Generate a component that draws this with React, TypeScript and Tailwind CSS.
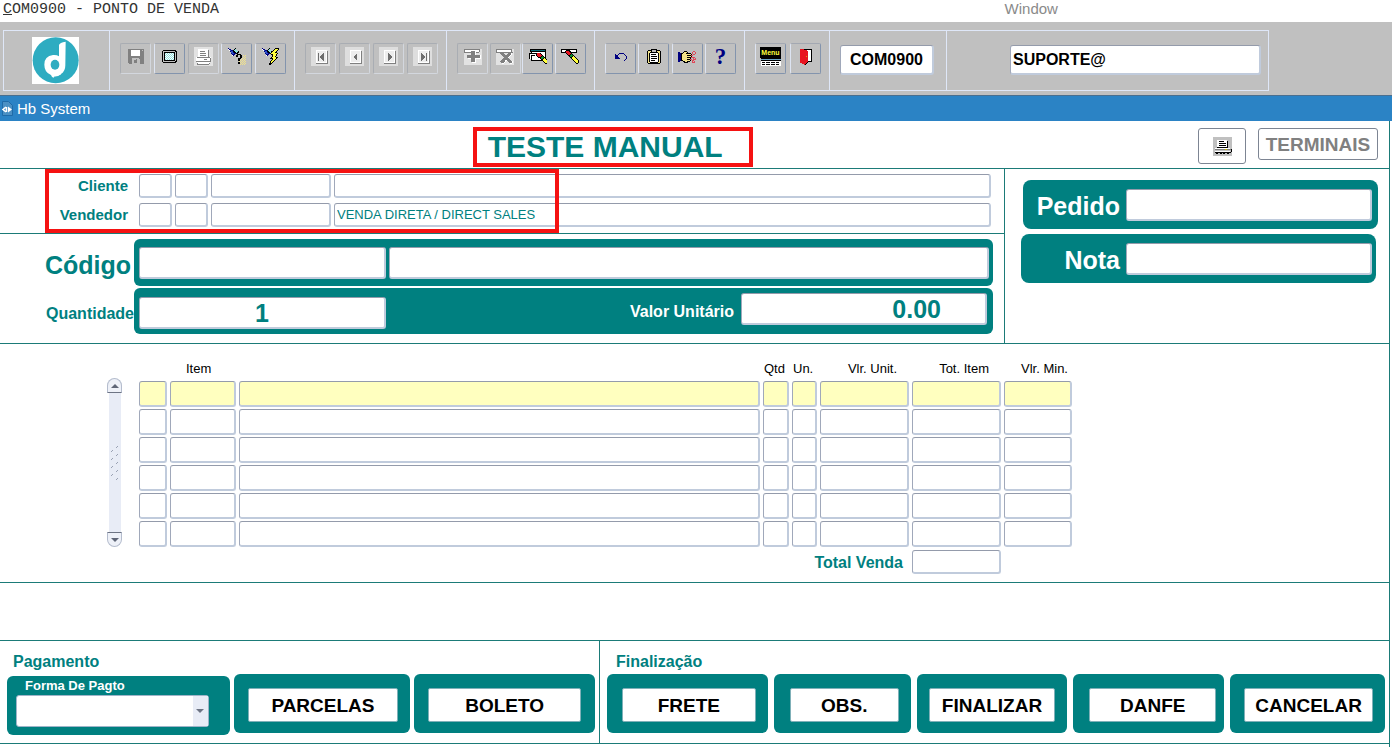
import { useState } from "react";
import type { InputHTMLAttributes, ReactNode } from "react";

const PALETTE: Record<string, string> = {
  k: "#000000",
  w: "#ffffff",
  g: "#808080",
  l: "#c0c0c0",
  e: "#e2e2e2",
  b: "#000080",
  u: "#2a50c8",
  c: "#8fe3e0",
  t: "#0a6f7f",
  y: "#ffff3c",
  o: "#c9b800",
  s: "#f3e38a",
  r: "#e81420",
  p: "#e04858",
  n: "#0a8a2a",
  v: "#6fa8c8",
};

const SPRITES = {
  save: [
    "gggggggggggggggg",
    "gggwwwwwwwwwgglg",
    "gggwwwwwwwwwgggg",
    "gggwwwwwwwwwgggg",
    "gggwwwwwwwwwgggg",
    "gggwwwwwwwwwgggg",
    "gggwwwwwwwwwgggg",
    "gggggggggggggggg",
    "gggggggggggggggg",
    "gggglllllllggggg",
    "ggggllllglllgggg",
    "ggggllggglllgggg",
    "ggggllggglllgggg",
    "ggggllggglllgggg",
    ".gggllllllllgggg",
  ],
  screen: [
    ".kkkkkkkkkkkkk.",
    "kllllllllllllkk",
    "klkkkkkkkkkkklk",
    "klkcwcwcwcwcklk",
    "klkwcwcwcwcwklk",
    "klkcwcwcwcwcklk",
    "klkwcwcwcwcwklk",
    "klkcwcwcwcwcklk",
    "klkwcwcwcwcwklk",
    "klkcwcwcwcwcklk",
    "klkkkkkkkkkkklk",
    "kllllllllllllkk",
    ".kkkkkkkkkkkkk.",
  ],
  printerOff: [
    "eeeeeeeeeeeeeeeeeee",
    "eeeeeeeeeeeeeeeeeee",
    "eeeewwwwwwwwwweeeee",
    "eeeewwwwwwwwwwgeeee",
    "eeeewwgggggwwwgeeee",
    "eeeewwwwwwwwwwgeeee",
    "eeeewwggggggwwgeeee",
    "eeeewwwwwwwwwwgeeee",
    "eeeewwggggggwwgeeee",
    "eeeewwwwwwwwwwgeeee",
    "eewgggggggggggggwee",
    "eewwwwwwwwwwwwwwgee",
    "eewwwwwwwwgggwwwgee",
    "eewwwwwwwwwwwwwwgee",
    "eegggggggggggggggee",
    "eeewwwwwwwwwwwwweee",
    "eeegwwwwwwwwwwwgeee",
    "eeeggggggggggggeeee",
    "eeeeeeeeeeeeeeeeeee",
  ],
  printer: [
    "lllllllllllllllllll",
    "lllllllllllllllllll",
    "lllllllllllllllllll",
    "llllwwwwwwwwwwlllll",
    "llllwwkkkkkwwwkllll",
    "llllwwwwwwwwwwkllll",
    "llllwwkkkkkkkwkllll",
    "llllwwwwwwwwwwkllll",
    "llllwwkkkkkkkwkllll",
    "llllwwwwwwwwwwkllll",
    "llllkkkkkkkkkkkllll",
    "llwwwwwwwwwwwwwwwll",
    "llggggggggggooggggk",
    "llllllllllllllllllk",
    "llwwwwwwwwwwwwwwwlk",
    "llkkkkkkkkkkkkkkkkl",
    "lllkkllkklkkllkklll",
    "lllllllllllllllllll",
    "lllllllllllllllllll",
  ],
  torchHelp: [
    "b......k..........",
    "wbb...kc..........",
    ".wubbkccc.........",
    "..buukkccck.......",
    "...uubkkckk.......",
    "...buubbkk........",
    "....bbb..kkkk.....",
    "....wb..kk..kk.s.s",
    "........kk..kk..s.",
    "............kk.s.s",
    "..........kkk.s.s.",
    "..........kk.s.s.s",
    "..........kks.s.s.",
    "...........s.s.s.s",
    "..........kks.s.s.",
    "..........kk.s.s.s",
    "............s.s.s.",
  ],
  torchBolt: [
    "b......k.....kkkk.",
    "wbb...kc....kyyyk.",
    ".wubbkccc..kyyyk..",
    "..buukkcckkyyyk...",
    "...uubkkckyyykk...",
    "...buubbkyyyyyyk..",
    "....bbb..kkyyyk...",
    "....wb....kyyyk...",
    "..........kyyk....",
    ".........kyyyykk..",
    "........kkkyyyk...",
    "..........kyyk....",
    ".........kyyk.....",
    "........kyyk......",
    "........kyk.......",
    ".......kkk........",
    ".......kk.........",
  ],
  queryEnter: [
    ".kkkkkkkkkkkkkkkk.",
    ".kttttttttttttttk.",
    ".kkkkkkkkkkkkkkkk.",
    "..kwwwwwwwwwwwwwk.",
    "kkkkkkkkrrrkwwwwk.",
    "kwwwwwwkrrrrkwwwk.",
    "kwkkkkwkrrrrrkwwk.",
    "kwkwwwwwkrrrknkwk.",
    "kwkwwwwwwkkknnnkk.",
    "kwkwwwwwwwwknnkyk.",
    "..kwwwwwwwwwkkyyyk",
    "..kkkkkkkkkkkkyyyy",
    "..............kyyy",
    "...............kyy",
    "................kk",
  ],
  queryCancel: [
    "kkkkkkkkkkkkkkkk..",
    "kwwwwkkkkwwwwwwk..",
    "kwwwkrrrkkwwwwwk..",
    "kkkkkrrrrkkkkkkk..",
    ".....krrrrk.......",
    "......krrknk......",
    ".......kknnnk.....",
    "........knnkyk....",
    ".........kkyyyk...",
    "..........kyyyyk..",
    "...........kyyyyk.",
    "............kyyyyk",
    ".............kyyyk",
    "..............kyyk",
    "...............kk.",
  ],
  add: [
    "ggggggggggggggggee",
    "gwwwwwwwwwwwwwwgee",
    "gwwwwwwggggwwwwgee",
    "gggggggggggwgggeee",
    "eeeeeeeggggweeeeee",
    "eeeeeeeggggweeeeee",
    "eeegggggggggggggwe",
    "eeegggggggggggggwe",
    "eeegggggggggggggwe",
    "eeeewwwggggwwwwwwe",
    "eeeeeeeggggweeeeee",
    "eeeeeeeggggweeeeee",
    "eeeeeeeggggweeeeee",
    "eeeeeeeewwwweeeeee",
    "eeeeeeeeeeeeeeeeee",
    "eeeeeeeeeeeeeeeeee",
  ],
  remove: [
    "ggggggggggggggggee",
    "gwwwwwwwwwwwwwwgee",
    "gwwwwwwwwwwwwwwgee",
    "ggggggggggggggggge",
    "eeeeggggeeeegggwee",
    "eeeeeggggeeggggwee",
    "eeeeeeggggggggweee",
    "eeeeeeeggggggweeee",
    "eeeeeeeeggggweeeee",
    "eeeeeeeggggggeeeee",
    "eeeeeeggggggggeeee",
    "eeeeeggggwwggggeee",
    "eeeegggggweeggggwe",
    "eeeeegggweeeegggwe",
    "eeeeeewweeeeeewwee",
    "eeeeeeeeeeeeeeeeee",
  ],
  undo: [
    "....bbbbb...",
    "b..b.....b..",
    "bbb.......b.",
    "bbb........b",
    "bbbb.......b",
    "bbbbb......b",
    "..........b.",
    ".........b..",
  ],
  clipboard: [
    "....kkkkkk....",
    ".kkkkllllkkkk.",
    "kssskllllksssk",
    "ksskkkkkkkkssk",
    "kskwwwwwwwwksk",
    "kskwkkkkkwwksk",
    "kskwwwwwwwwksk",
    "kskwkkkkkkwksk",
    "kskwwwwwwwwksk",
    "kskwkkkkkkwksk",
    "kskwwwwwwwwksk",
    "kskwkkkkwwwksk",
    "kskwwwwwwwwksk",
    "ksskkkkkkkkssk",
    ".kkkkkkkkkkkk.",
  ],
  hand: [
    "......kkk......pp.",
    "bb...ksssk....p..p",
    "bbbkkssskkkkk.p..p",
    "bbbksssssssssk.pp.",
    "bbbkssssskkkkpp...",
    "bbbksssssssssk....",
    "bbbkssssskkkkpppp.",
    "bbbkssssssssk..p.p",
    "bbbkssssskkkpp.ppp",
    "bbbkksssssssk.pp..",
    "bb...kksskkk..p.p.",
    "......kkkk....ppp.",
  ],
  menuGrid: [
    "kkkkkkkkkkkkkkkkkkkk",
    "vvvvvvvvvvvvvvvvvvvv",
    "kkkkkkkkkkkkkkkkkkkk",
    "wwwwwwwwwwwwwwwwwwww",
    "wkkkwkkkkwkkkkwkkkww",
    "wwwwwwwwwwwwwwwwwwww",
    "wkkkwkkkkwkkkkwkkkww",
    "wwwwwwwwwwwwwwwwwwww",
  ],
  exit: [
    "rrrrkkkkkkkk",
    "rrrrrrrwwwwk",
    "rrrrrrrrwwwk",
    "rrrrrrrrwwwk",
    "rrrrrrrrwwwk",
    "rrrrrrrrwwwk",
    "rrrrrrrrwwwk",
    "rrrrrrorwwwk",
    "rrrrrrrrwwwk",
    "rrrrrrrrwwwk",
    "rrrrrrrrwwwk",
    "rrrrrrrrwwwk",
    "rrrrrrrrkkkk",
    "rrrrrrrk....",
    "..rrrrk.....",
    "....rk......",
  ],
};

function Sprite({ name }: { name: keyof typeof SPRITES }) {
  const rows = SPRITES[name];
  const width = Math.max(...rows.map((r) => r.length));
  return (
    <svg
      className="shrink-0"
      width={width}
      height={rows.length}
      viewBox={`0 0 ${width} ${rows.length}`}
      shapeRendering="crispEdges"
      aria-hidden="true"
    >
      {rows.flatMap((row, y) =>
        [...row].map((ch, x) => (ch === "." ? null : <rect key={`${x}-${y}`} x={x} y={y} width="1" height="1" fill={PALETTE[ch]} />))
      )}
    </svg>
  );
}

function NavIcon({ points, bar }: { points: string; bar?: number }) {
  return (
    <svg width="19" height="19" viewBox="0 0 19 19" shapeRendering="crispEdges" aria-hidden="true">
      <path fill="#dedede" d="M0 0h19v19H0z" />
      <path fill="#808080" d="M5 4h12v13H5z" />
      <path fill="#fff" d="M5 3h11v13H5z" />
      <path fill="#ededed" d="M6 4h9v11H6z" />
      <polygon fill="#6e6e6e" points={points} />
      {bar && <path fill="#6e6e6e" d={`M${bar} 6h1v8h-1z`} />}
    </svg>
  );
}

function MenuIcon() {
  return (
    <span className="flex flex-col items-center">
      <span className="bg-black px-px text-[7px] leading-[11px] font-bold text-[#ffff3c]">Menu</span>
      <Sprite name="menuGrid" />
    </span>
  );
}

function Logo() {
  return (
    <svg className="ml-7" width="47" height="47" viewBox="0 0 141 141" role="img" aria-label="Logo">
      <path fill="#fff" d="M0 0h141v141H0z" />
      <circle cx="71" cy="70" r="69" fill="#2eacc1" />
      <path
        fill="#fff"
        d="M81 24q2-7 20-10l-1 71q0 18-13 26-9 6-19 5 0 4-4 6-5-1-7-8-20-8-20-31 0-26 26-29 11-1 18 4z"
      />
      <ellipse cx="69" cy="83" rx="13" ry="15" fill="#2eacc1" />
      <path fill="none" stroke="#fff" strokeWidth="5" d="M58 110q10 12 28 0" />
    </svg>
  );
}

type Tool = { label: string; icon: ReactNode; off?: boolean };

const TOOL_GROUPS: { width: string; tools: Tool[] }[] = [
  {
    width: "w-[185px]",
    tools: [
      { label: "Salvar", icon: <Sprite name="save" />, off: true },
      { label: "Tela", icon: <Sprite name="screen" /> },
      { label: "Imprimir", icon: <Sprite name="printerOff" />, off: true },
      { label: "Consultar", icon: <Sprite name="torchHelp" /> },
      { label: "Executar consulta", icon: <Sprite name="torchBolt" /> },
    ],
  },
  {
    width: "w-[152px]",
    tools: [
      { label: "Primeiro", icon: <NavIcon points="13,6 13,14 8,10" bar={7} />, off: true },
      { label: "Anterior", icon: <NavIcon points="12,6 12,14 8,10" />, off: true },
      { label: "Próximo", icon: <NavIcon points="9,6 9,14 13,10" />, off: true },
      { label: "Último", icon: <NavIcon points="8,6 8,14 12,10" bar={13} />, off: true },
    ],
  },
  {
    width: "w-[148px]",
    tools: [
      { label: "Inserir", icon: <Sprite name="add" />, off: true },
      { label: "Remover", icon: <Sprite name="remove" />, off: true },
      { label: "Limpar registro", icon: <Sprite name="queryEnter" /> },
      { label: "Limpar item", icon: <Sprite name="queryCancel" /> },
    ],
  },
  {
    width: "w-[150px]",
    tools: [
      { label: "Desfazer", icon: <Sprite name="undo" /> },
      { label: "Lista", icon: <Sprite name="clipboard" /> },
      { label: "Editar", icon: <Sprite name="hand" /> },
      {
        label: "Ajuda",
        icon: <span className="font-['Liberation_Serif',serif] text-[23px] leading-none font-bold text-[#000080]">?</span>,
      },
    ],
  },
  {
    width: "w-[85px]",
    tools: [
      { label: "Menu", icon: <MenuIcon /> },
      { label: "Sair", icon: <Sprite name="exit" /> },
    ],
  },
];

function ToolButton({ label, icon, off }: Tool) {
  return (
    <button
      aria-label={label}
      disabled={off}
      className={`flex h-[31px] w-[31px] items-center justify-center rounded-xs border pb-1 ${
        off
          ? "border-t-[#a9adb3] border-r-[#d3d7de] border-b-[#d3d7de] border-l-[#a9adb3]"
          : "border-t-[#a3a8b2] border-r-[#8394ad] border-b-[#8394ad] border-l-[#dde4f2]"
      }`}
    >
      {icon}
    </button>
  );
}

function Field({ className = "", ...props }: InputHTMLAttributes<HTMLInputElement>) {
  return (
    <input
      className={`block min-w-0 rounded-[3px] border border-r-2 border-b-2 border-t-[#949bab] border-r-[#c0cbdc] border-b-[#c0cbdc] border-l-[#a0a8ba] outline-none ${className}`}
      {...props}
    />
  );
}

const COLUMNS = [
  { head: "", name: "Marca", width: "w-[28px]", align: "" },
  { head: "Item", name: "Item", width: "w-[66px]", align: "pl-4 text-left" },
  { head: "", name: "Descrição", width: "", align: "" },
  { head: "Qtd", name: "Qtd", width: "w-[26px]", align: "pl-px text-left" },
  { head: "Un.", name: "Un.", width: "w-[25px]", align: "pl-px text-left" },
  { head: "Vlr. Unit.", name: "Vlr. Unit.", width: "w-[89px]", align: "pr-3 text-right" },
  { head: "Tot. Item", name: "Tot. Item", width: "w-[89px]", align: "pr-3 text-right" },
  { head: "Vlr. Min.", name: "Vlr. Min.", width: "w-[68px]", align: "pr-1 text-right" },
];

function ItemsTable() {
  return (
    <table className="w-full table-fixed border-separate border-spacing-x-[3px] border-spacing-y-[2px]">
      <thead>
        <tr className="h-5">
          {COLUMNS.map((c) => (
            <th key={c.name} className={`p-0 align-top text-[13px] leading-5 font-normal whitespace-nowrap text-black ${c.width} ${c.align}`}>
              {c.head}
            </th>
          ))}
        </tr>
      </thead>
      <tbody>
        {[1, 2, 3, 4, 5, 6].map((row) => (
          <tr key={row}>
            {COLUMNS.map((c) => (
              <td key={c.name} className="p-0">
                <Field aria-label={`${c.name} ${row}`} className={`h-[26px] w-full px-1 text-[13px] ${row === 1 ? "bg-[#ffffbf]" : "bg-white"}`} />
              </td>
            ))}
          </tr>
        ))}
      </tbody>
      <tfoot>
        <tr>
          <td colSpan={6} className="p-0 pt-[3px] pr-[6px] text-right leading-none">
            <label htmlFor="total" className="text-base leading-5 font-bold text-[#008080]">
              Total Venda
            </label>
          </td>
          <td className="p-0 pt-px">
            <Field id="total" className="h-6 w-full bg-white px-1 text-[13px]" />
          </td>
        </tr>
      </tfoot>
    </table>
  );
}

function Scroller() {
  const cap = "flex h-[15px] w-[15px] items-center justify-center border border-[#b4bccd] bg-[#eef1f8]";
  return (
    <div className="mt-[34px] flex h-[169px] flex-col items-center">
      <button aria-label="Subir" className={`${cap} rounded-t-full border-b-[#6d7484]`}>
        <svg width="8" height="4" viewBox="0 0 8 4"><path fill="#5f6677" d="M4 0l4 4H0z" /></svg>
      </button>
      <div className="flex w-3 flex-1 items-center justify-center bg-[#e8ecf6]">
        <svg width="8" height="36" viewBox="0 0 8 36" stroke="#9aa2b4" strokeWidth="1">
          <path d="M0 7l2-2M5 3l2-2M0 15l2-2M5 11l2-2M0 23l2-2M5 19l2-2M0 31l2-2M5 27l2-2M5 35l2-2" />
        </svg>
      </div>
      <button aria-label="Descer" className={`${cap} rounded-b-full border-t-[#6d7484]`}>
        <svg width="8" height="4" viewBox="0 0 8 4"><path fill="#5f6677" d="M0 0h8L4 4z" /></svg>
      </button>
    </div>
  );
}

function ActionButton({ label, pad }: { label: string; pad: string }) {
  return (
    <div className={`h-[59px] rounded-md bg-[#008080] pt-[14px] pb-3 ${pad}`}>
      <button className="h-[34px] w-full rounded-xs border border-[#7fb0b8] bg-white text-[19px] leading-none font-bold text-black">{label}</button>
    </div>
  );
}

export default function App() {
  const [quantity, setQuantity] = useState("1");
  const [price, setPrice] = useState("0.00");
  const [user, setUser] = useState("SUPORTE@");
  const [seller, setSeller] = useState("VENDA DIRETA / DIRECT SALES");

  return (
    <div className="min-h-screen bg-white font-['Liberation_Sans',Arial,sans-serif]">
      {/* menu */}
      <header className="flex h-[22px] items-start justify-between pr-[24%] pl-[3px]">
        <h1 className="font-['Liberation_Mono',monospace] text-[15px] leading-5 text-[#333]">
          <span className="underline">C</span>OM0900 - PONTO DE VENDA
        </h1>
        <button className="text-[15px] leading-[18px] text-[#8a8a8a]">Window</button>
      </header>

      {/* barra de ferramentas */}
      <div className="bg-[#c0c0c0] pt-2 pr-[123px] pb-1 pl-[3px]">
        <div className="flex h-[61px] border border-[#dfe7f8]">
          <div className="flex w-[106px] shrink-0 items-center border-r border-[#dfe7f8]">
            <Logo />
          </div>
          {TOOL_GROUPS.map((g) => (
            <div key={g.width} className={`flex shrink-0 justify-between border-r border-[#dfe7f8] pt-3 pr-2 pl-[10px] ${g.width}`}>
              {g.tools.map((t) => (
                <ToolButton key={t.label} {...t} />
              ))}
            </div>
          ))}
          <div className="w-[117px] shrink-0 border-r border-[#dfe7f8] pt-[14px] pr-3 pl-[10px]">
            <Field aria-label="Programa" readOnly value="COM0900" className="h-[30px] w-full bg-white text-center text-base font-bold text-black" />
          </div>
          <div className="min-w-0 flex-1 pt-[14px] pr-[7px] pl-[63px]">
            <Field
              aria-label="Usuário"
              value={user}
              onChange={(e) => setUser(e.target.value)}
              className="h-[30px] w-full bg-white px-[2px] text-base font-bold text-black"
            />
          </div>
        </div>
      </div>

      <div className="flex h-[26px] items-center gap-1 border-t border-[#4a6f8f] bg-[#2b83c5] pl-[2px] text-[15px] leading-6 text-white">
        <svg width="11" height="18" viewBox="0 0 11 18" aria-hidden="true">
          <path fill="#4a90c4" stroke="#1f6ba8" d="M.5 1.500h6l4 4v10h-10z" />
          <path fill="none" stroke="#fff" strokeWidth="1.500" d="M4 7L1 9.500 4 12M4.500 7v5" />
          <path fill="#fff" d="M6 6.500l4 3-4 3z" />
        </svg>
        Hb System
      </div>

      <main className="mr-[2px] border-r border-[#1b7b78] pb-[3px]">
        {/* título */}
        <div className="flex h-[48px] items-start border-b border-[#1b7b78] pt-[6px] pr-[11px]">
          <h2 className="ml-[34.3%] h-10 w-[280px] border-4 border-[#f51212] pl-[11px] text-[30px] leading-8 font-bold whitespace-nowrap text-[#008080]">
            TESTE MANUAL
          </h2>
          <div className="ml-auto flex items-start gap-3 pt-px">
            <button aria-label="Imprimir" className="flex h-9 w-12 items-center justify-center rounded-[3px] border border-[#7d8593]">
              <Sprite name="printer" />
            </button>
            <button className="h-8 w-[120px] rounded-[3px] border border-[#7d8593] text-[19px] leading-none font-bold text-[#808080]">
              TERMINAIS
            </button>
          </div>
        </div>

        <div className="flex border-b border-[#1b7b78]">
          <div className="min-w-0 flex-1 border-r border-[#1b7b78]">
            {/* cliente e vendedor */}
            <div className="relative flex flex-col gap-[5px] border-b border-[#1b7b78] pt-[5px] pr-[13px] pb-[6px]">
              {[
                { label: "Cliente", id: "cliente" },
                { label: "Vendedor", id: "vendedor" },
              ].map((r) => (
                <div key={r.id} className="flex items-center gap-[3px]">
                  <label htmlFor={r.id} className="mr-2 w-32 text-right text-[15px] leading-6 font-bold text-[#008080]">
                    {r.label}
                  </label>
                  <Field id={r.id} className="h-6 w-[33px] px-1" />
                  <Field aria-label={`${r.label} filial`} className="h-6 w-[33px] px-1" />
                  <Field aria-label={`${r.label} documento`} className="h-6 w-[120px] px-1" />
                  <Field
                    aria-label={`${r.label} nome`}
                    className="h-6 flex-1 px-[2px] pb-px text-[13px] text-[#008080]"
                    {...(r.id === "vendedor" ? { value: seller, onChange: (e) => setSeller(e.target.value) } : {})}
                  />
                </div>
              ))}
              <div className="pointer-events-none absolute inset-y-0 left-[45px] w-[514px] border-4 border-[#f51212]" />
            </div>

            {/* produto */}
            <div className="flex flex-col gap-[2px] pt-[5px] pr-[11px] pb-[9px]">
              <div className="flex items-center">
                <label htmlFor="codigo" className="w-[134px] pt-1 pr-[3px] text-right text-[25px] leading-8 font-bold text-[#008080]">
                  Código
                </label>
                <div className="flex h-[47px] flex-1 items-center gap-[3px] rounded-md bg-[#008080] pr-1 pl-[5px]">
                  <Field id="codigo" className="h-8 w-[247px] bg-white px-2 text-[25px]" />
                  <Field aria-label="Produto" className="h-8 flex-1 bg-white px-2 text-[25px]" />
                </div>
              </div>
              <div className="flex items-center">
                <label htmlFor="qtde" className="w-[134px] pt-[6px] text-right text-base leading-6 font-bold text-[#008080]">
                  Quantidade
                </label>
                <div className="flex h-[46px] flex-1 items-center rounded-md bg-[#008080] py-[5px] pr-[6px] pl-[5px]">
                  <Field
                    id="qtde"
                    value={quantity}
                    onChange={(e) => setQuantity(e.target.value)}
                    className="h-8 w-[247px] self-end bg-white pt-[3px] text-center text-[25px] font-bold text-[#008080]"
                  />
                  <label htmlFor="valor" className="ml-auto pt-px pr-[7px] text-base font-bold text-white">
                    Valor Unitário
                  </label>
                  <Field
                    id="valor"
                    value={price}
                    onChange={(e) => setPrice(e.target.value)}
                    className="h-8 w-[246px] self-start bg-white pt-[3px] pr-11 text-right text-[25px] font-bold text-[#008080]"
                  />
                </div>
              </div>
            </div>
          </div>

          {/* pedido e nota */}
          <div className="flex w-96 shrink-0 flex-col gap-[5px] pt-[11px]">
            <div className="mr-[11px] ml-[18px] flex h-[49px] items-center gap-[6px] rounded-lg bg-[#008080] pr-[6px]">
              <label htmlFor="pedido" className="w-[97px] pt-[2px] text-right text-[25px] leading-8 font-bold text-white">
                Pedido
              </label>
              <Field id="pedido" className="h-8 flex-1 bg-white px-2 text-[25px]" />
            </div>
            <div className="mr-[13px] ml-4 flex h-[49px] items-center gap-[6px] rounded-lg bg-[#008080] pr-1">
              <label htmlFor="nota" className="w-[99px] pt-[2px] text-right text-[25px] leading-8 font-bold text-white">
                Nota
              </label>
              <Field id="nota" className="h-8 flex-1 bg-white px-2 text-[25px]" />
            </div>
          </div>
        </div>

        {/* itens */}
        <div className="flex gap-[14px] border-b border-[#1b7b78] pr-[314px] pb-[6px] pl-[107px]">
          <Scroller />
          <div className="min-w-0 flex-1 pt-[13px]">
            <ItemsTable />
          </div>
        </div>

        <div className="h-[58px] border-b border-[#1b7b78]" />

        {/* rodapé */}
        <div className="grid grid-cols-[600fr_789fr] border-b border-[#1b7b78]">
          <section className="border-r border-[#1b7b78] pr-1 pb-2 pl-[7px]">
            <h3 className="pt-[9px] pl-[6px] text-base leading-6 font-bold text-[#008080]">Pagamento</h3>
            <div className="grid grid-cols-[223fr_177fr_181fr] gap-x-1">
              <div className="mt-[2px] h-[59px] rounded-md bg-[#008080] pr-[21px] pl-[9px]">
                <label htmlFor="forma" className="block pl-[9px] text-[13px] leading-[19px] font-bold text-white">
                  Forma De Pagto
                </label>
                <div className="relative">
                  <select id="forma" className="h-8 w-full appearance-none rounded-[3px] border border-[#9fb4c8] bg-white pl-2 text-sm outline-none">
                    <option></option>
                  </select>
                  <span className="pointer-events-none absolute inset-y-px right-px flex w-[15px] items-center justify-center bg-[#e8ecf6]">
                    <svg width="8" height="4" viewBox="0 0 8 4"><path fill="#6d7484" d="M0 0h8L4 4z" /></svg>
                  </span>
                </div>
              </div>
              <ActionButton label="PARCELAS" pad="pl-[14px] pr-3" />
              <ActionButton label="BOLETO" pad="px-[14px]" />
            </div>
          </section>
          <section className="pr-1 pb-2 pl-[7px]">
            <h3 className="pt-[9px] pl-[9px] text-base leading-6 font-bold text-[#008080]">Finalização</h3>
            <div className="grid grid-cols-[161fr_137fr_151fr_151fr_155fr] gap-x-[6px]">
              <ActionButton label="FRETE" pad="pl-[15px] pr-3" />
              <ActionButton label="OBS." pad="pl-4 pr-3" />
              <ActionButton label="FINALIZAR" pad="px-3" />
              <ActionButton label="DANFE" pad="pl-4 pr-2" />
              <ActionButton label="CANCELAR" pad="pl-[14px] pr-3" />
            </div>
          </section>
        </div>
      </main>
    </div>
  );
}
